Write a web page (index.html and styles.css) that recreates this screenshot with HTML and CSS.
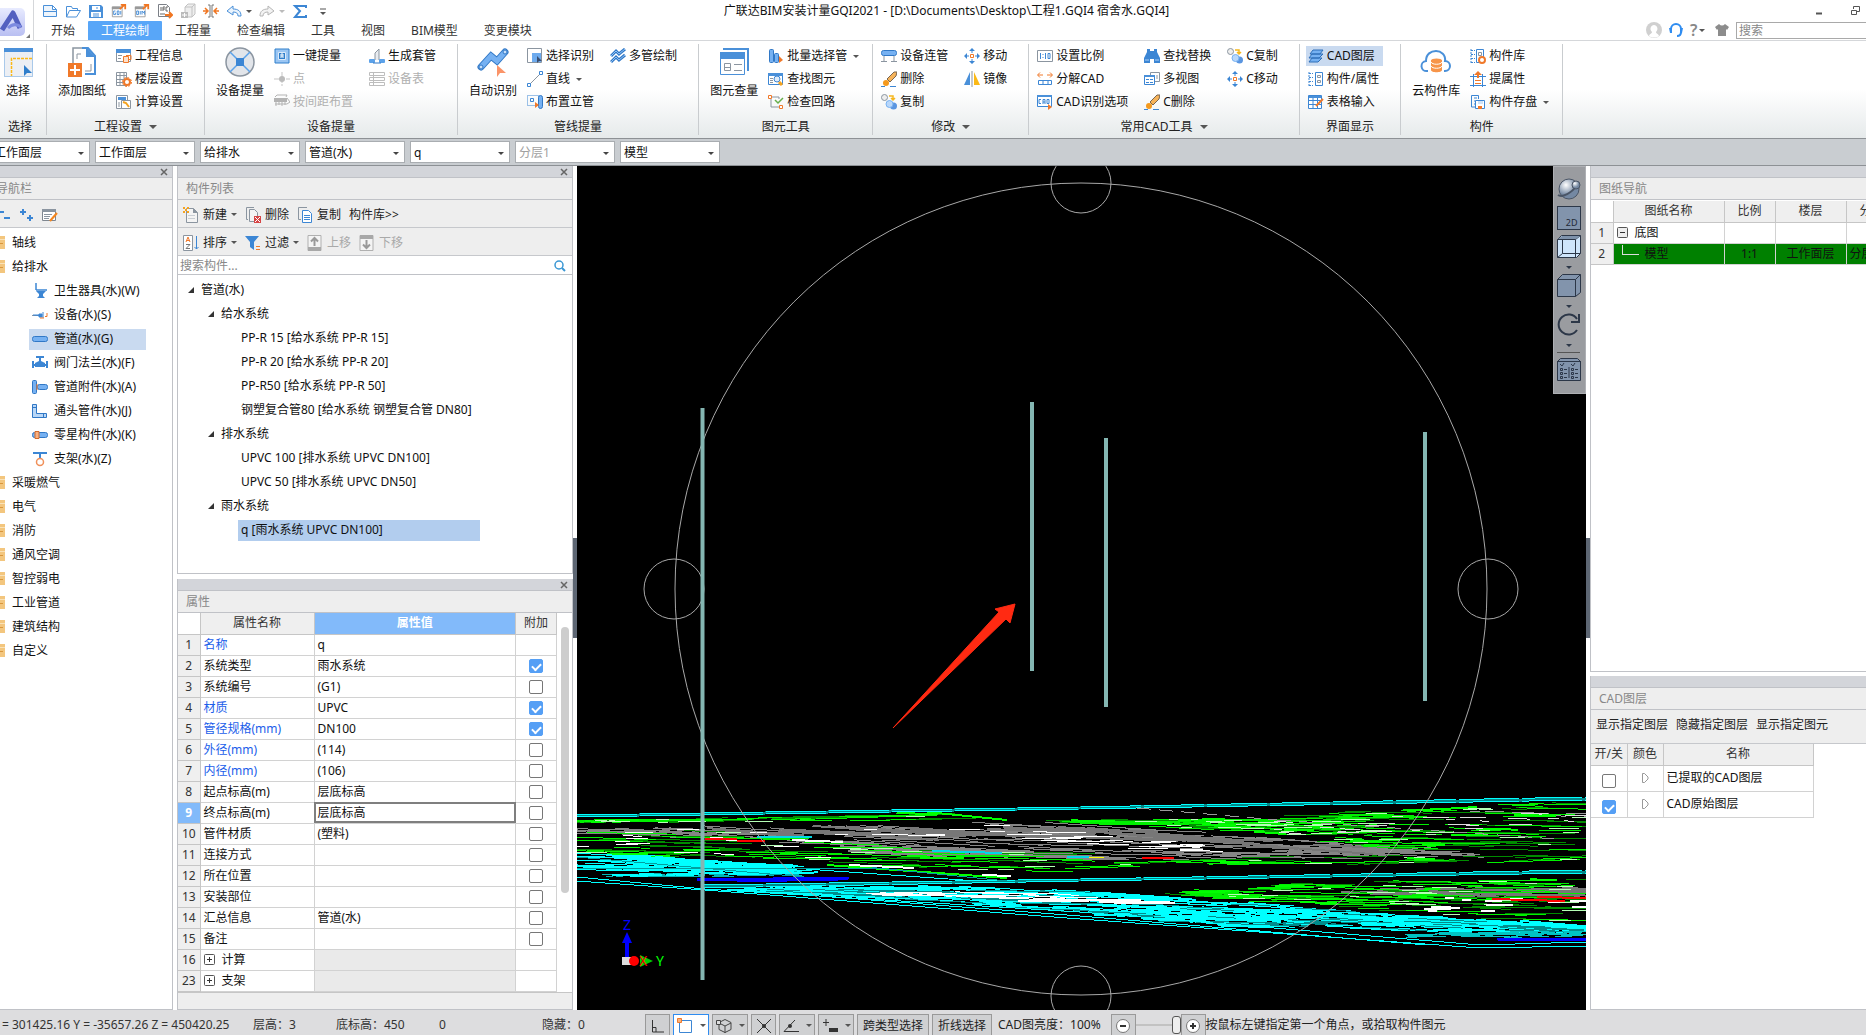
FILE: index.html
```html
<!DOCTYPE html>
<html lang="zh-CN">
<head>
<meta charset="utf-8">
<title>广联达BIM安装计量GQI2021</title>
<link rel="stylesheet" href="styles.css">
</head>
<body>
<svg class="defs" aria-hidden="true">
  <symbol id="i-new" viewBox="0 0 16 16"><path d="M1.5 2.500h9l4 4v7h-13zM10.500 2.500v4h4M4 8.500h-2.500M1.500 8.500h13" fill="#eef5fc" stroke="#4a90d9"/></symbol>
  <symbol id="i-open" viewBox="0 0 16 16"><path d="M1.500 14V3.500h5l1 2h5v2M1.500 14l3-6.500h11l-4 6.500z" fill="#fff" stroke="#4a90d9"/></symbol>
  <symbol id="i-save" viewBox="0 0 16 16"><path d="M1 2h12l2 2v11H1z" fill="#4a90d9"/><path d="M4 3h8v4H4zM3 9h10v5H3z" fill="#fff"/><path d="M5 11h6M5 13h6M9 4v2" stroke="#4a90d9"/></symbol>
  <symbol id="i-gqi" viewBox="0 0 18 16"><path d="M1.500 3.500h11v11h-11z" fill="#fff" stroke="#999"/><path d="M1 3h10v3H1z" fill="#999"/><path d="M5 8H3v4h2v-2M7 8h2v4H7zM11 8v4" fill="none" stroke="#3c86d4"/><path d="M10 6l5-5M11 1h5v5" fill="none" stroke="#f07622" stroke-width="2"/></symbol>
  <symbol id="i-bim" viewBox="0 0 18 16"><path d="M1.500 3.500h11v11h-11z" fill="#fff" stroke="#999"/><path d="M1 3h10v3H1z" fill="#999"/><path d="M3 8h2v4H3zM7 8v4M9 12V8l1.500 2L12 8v4" fill="none" stroke="#3c86d4"/><path d="M10 6l5-5M11 1h5v5" fill="none" stroke="#f07622" stroke-width="2"/></symbol>
  <symbol id="i-ifc" viewBox="0 0 16 16"><path d="M1.500 1.500h8l3 3v9h-11z" fill="#fff" stroke="#7b7f86"/><path d="M4 4v4M6 8V4h2M6 6h2M11 4H9v4h2M3 11h5" fill="none" stroke="#666"/><path d="M8 12h6M12 9l3 3-3 3" fill="none" stroke="#f07622" stroke-width="2"/></symbol>
  <symbol id="i-box" viewBox="0 0 16 16"><path d="M5 4l3-3h7v10l-3 3H5z" fill="#eee" stroke="#c2c2c2"/><path d="M5 4h7v10M12 4l3-3" fill="none" stroke="#c2c2c2"/><path d="M1 9h7v6H1z" fill="#bbb"/><path d="M4.500 10v4M2 12h5" stroke="#fff"/></symbol>
  <symbol id="i-merge" viewBox="0 0 16 16"><path d="M5 2h2v12H5M11 2H9v12h2" fill="none" stroke="#777"/><path d="M0 8h4M2 5l3 3-3 3M16 8h-4M14 5l-3 3 3 3" fill="none" stroke="#f07622" stroke-width="1.500"/></symbol>
  <symbol id="i-undo" viewBox="0 0 16 16"><path d="M1 8l6-5v3c5 0 8 2 8 7h-3c0-3-2-4-5-4v3z" fill="#eaf3fc" stroke="#4a90d9"/></symbol>
  <symbol id="i-redo" viewBox="0 0 16 16"><path d="M15 8L9 3v3c-5 0-8 2-8 7h3c0-3 2-4 5-4v3z" fill="#f3f3f3" stroke="#b5b5b5"/></symbol>
  <symbol id="i-sum" viewBox="0 0 16 16"><path d="M14 5V3H3l5 5-5 6h11v-2" fill="none" stroke="#3c86d4" stroke-width="2"/></symbol>
  <symbol id="i-more" viewBox="0 0 16 16"><path d="M5 6h6" stroke="#555"/><path d="M5 9h6l-3 3z" fill="#555"/></symbol>
  <symbol id="i-close" viewBox="0 0 8 8"><path d="M1 1l6 6M7 1L1 7" stroke="#666" stroke-width="1.500"/></symbol>

  <symbol id="b-select" viewBox="0 0 32 32"><path d="M2.500 2.500h28v28h-28z" fill="#eceff4" stroke="#c7ccd4"/><path d="M2 2h29v4H2z" fill="#4a90d9"/><path d="M9.500 31V12.500H30" fill="none" stroke="#fbb917" stroke-width="1.500" stroke-dasharray="3 1"/><path d="M22 19v11l3-3h5z" fill="#2f7ecb"/><path d="M2.500 6v24.500h28V6" fill="none" stroke="#a9c9ea"/></symbol>
  <symbol id="b-add" viewBox="0 0 32 32"><path d="M7 17V2h15" fill="none" stroke="#8b95a0" stroke-width="1.500"/><path d="M16 2h6l7 8v18h-10" fill="none" stroke="#4a90d9" stroke-width="2"/><path d="M20 1l9 10h-9z" fill="#4a90d9"/><path d="M11 13V8h4M25 18v7h-6" fill="none" stroke="#8b95a0"/><path d="M2 17h14v14H2z" fill="#f0792a"/><path d="M9 19v10M4 24h10" stroke="#fff" stroke-width="2"/></symbol>
  <symbol id="b-device" viewBox="0 0 32 32"><circle cx="16" cy="16" r="14" fill="#e2e5ea" stroke="#8b95a0" stroke-width="1.500"/><path d="M6 6l20 20M26 6L6 26" stroke="#5ca2ea" stroke-width="1.500"/><path d="M12 12h8v8h-8z" fill="#3c86d4"/></symbol>
  <symbol id="b-auto" viewBox="0 0 32 32"><path d="M4 21L14 10l6 5 8-9" fill="none" stroke="#3178c6" stroke-width="7" stroke-linecap="round"/><path d="M4 21L14 10l6 5 8-9" fill="none" stroke="#76b1f2" stroke-width="5" stroke-linecap="round"/><circle cx="4" cy="21" r="2" fill="#c6dffa" stroke="#3178c6"/><circle cx="28" cy="6" r="2" fill="#c6dffa" stroke="#3178c6"/><path d="M20 19v12l3-4 6 0z" fill="#fb9468"/></symbol>
  <symbol id="b-query" viewBox="0 0 32 32"><path d="M5 3h25v22" fill="none" stroke="#4a90d9" stroke-width="2"/><path d="M2.500 7.500h24v21h-24z" fill="#fff" stroke="#4a90d9"/><path d="M2 6h25v7H2z" fill="#4a90d9"/><path d="M6.500 17.500h6v7h-6zM6 21.500h6M16 18.500h8M16 24.500h8" fill="none" stroke="#8b95a0"/></symbol>
  <symbol id="b-cloud" viewBox="0 0 32 32"><path d="M8 25H7a5 5 0 0 1-1-10C6 8 11 5 16 5s10 4 9 10a5 5 0 0 1 0 10h-1" fill="none" stroke="#4a90d9" stroke-width="2"/><path d="M11 14v10c0 3 11 3 11 0V14" fill="#f7954a"/><ellipse cx="16.500" cy="14.500" rx="5.500" ry="2" fill="#f7954a"/><path d="M11 16c1 3 10 3 11 0M11 20c1 3 10 3 11 0" fill="none" stroke="#fff"/></symbol>

  <symbol id="s-info" viewBox="0 0 16 16"><path d="M.5 1.500h14v12H.5z" fill="#fff" stroke="#8b95a0"/><path d="M0 1h15v4H0z" fill="#4a90d9"/><path d="M2 7.500h4M2 10.500h3" stroke="#8b95a0"/><path d="M7.500 8.500h5v6h-5z" fill="#fbe0cb" stroke="#f0792a"/><path d="M10 7.500h5v4h-2" fill="none" stroke="#f0792a"/></symbol>
  <symbol id="s-floor" viewBox="0 0 16 16"><path d="M.5 1.500h10v13H.5zM4 1v14M0 4.500h11M0 8.500h11M0 11.500h11M8 1v7" fill="#fff" stroke="#8b95a0"/><circle cx="11" cy="11" r="4.500" fill="none" stroke="#f0792a" stroke-dasharray="2 1.500"/><circle cx="11" cy="11" r="3" fill="#fff" stroke="#f0792a" stroke-width="2"/></symbol>
  <symbol id="s-calc" viewBox="0 0 16 16"><path d="M.5 1.500h11v13H.5z" fill="#fff" stroke="#8b95a0"/><path d="M2 3h8v3H2z" fill="#4a90d9"/><path d="M3 8v5" stroke="#8b95a0"/><path d="M5.500 6.500h9v8h-9z" fill="#fff" stroke="#8b95a0"/><path d="M7 8l3 1 3 4" fill="none" stroke="#f5a31e" stroke-width="2"/></symbol>
  <symbol id="s-onekey" viewBox="0 0 16 16"><path d="M1 1h14v14H1z" fill="#9bc6f3" stroke="#2f7ecb"/><path d="M4.500 4.500h7v7h-7z" fill="#2f7ecb" stroke="#dcebfb"/><path d="M7 10V6h2v4M7 8h2" fill="none" stroke="#fff"/></symbol>
  <symbol id="s-point" viewBox="0 0 16 16"><path d="M8 1v14M0 8h16" stroke="#c5c5c5" stroke-dasharray="5 1"/><circle cx="8" cy="8" r="3" fill="#bbb"/></symbol>
  <symbol id="s-space" viewBox="0 0 16 16"><path d="M0 4h13v4H0z" fill="#b3b3b3"/><path d="M1 10h12M1 3l2-2h10l-1 2" fill="none" stroke="#b3b3b3"/><path d="M2 8v4M5 8v3M8 8v4M11 8v3M13 4l3 4-3 2" fill="none" stroke="#b3b3b3"/></symbol>
  <symbol id="s-sleeve" viewBox="0 0 16 16"><path d="M6 12V5l4-4v11" fill="#e8ebef" stroke="#8b95a0"/><rect x="0" y="11" width="6" height="4" rx="1" fill="#5ca2ea"/><rect x="10" y="11" width="6" height="4" rx="1" fill="#5ca2ea"/><path d="M4 15h8" stroke="#3178c6"/></symbol>
  <symbol id="s-list" viewBox="0 0 16 16"><path d="M.5 1.500h15v3H.5zM.5 6.500h15v3H.5zM.5 11.500h15v3H.5zM4.500 1v14" fill="none" stroke="#bdbdbd"/></symbol>
  <symbol id="s-pick" viewBox="0 0 16 16"><path d="M.5.5h14v14H.5z" fill="#fff" stroke="#8b95a0"/><path d="M5 5h9v9H5z" fill="#6eabee"/><path d="M10 8v7l2-2h3z" fill="#3b4f70"/></symbol>
  <symbol id="s-line" viewBox="0 0 16 16"><path d="M2 14L14 2" stroke="#8b95a0"/><path d="M.5 12.500h3v3h-3zM12.500.5h3v3h-3z" fill="#fff" stroke="#3c86d4"/></symbol>
  <symbol id="s-riser" viewBox="0 0 16 16"><path d="M.5 1.500h11v10H.5z" fill="none" stroke="#3c86d4" stroke-dasharray="1 1"/><path d="M3.500 4.500h3v3h-3z" fill="none" stroke="#3c86d4"/><rect x="11.500" y="1.500" width="4" height="13" rx="2" fill="#76b1f2" stroke="#3178c6"/><path d="M8 8v6l4-3z" fill="#f0792a"/></symbol>
  <symbol id="s-multi" viewBox="0 0 16 16"><path d="M1 8l5-5 3 3 6-5M1 14l5-5 3 3 6-5" fill="none" stroke="#3178c6" stroke-width="3"/><path d="M1 8l5-5 3 3 6-5M1 14l5-5 3 3 6-5" fill="none" stroke="#8ec1f6"/></symbol>
  <symbol id="s-batch" viewBox="0 0 16 16"><rect x="1.500" y="1.500" width="4" height="13" rx="1" fill="#76b1f2" stroke="#3178c6"/><rect x="6.500" y="5.500" width="4" height="9" rx="1" fill="#76b1f2" stroke="#3178c6"/><path d="M11 8v7l4-3z" fill="#f0792a"/></symbol>
  <symbol id="s-find" viewBox="0 0 16 16"><path d="M.5 2.500h14v11H.5z" fill="#fff" stroke="#3c86d4"/><path d="M0 2h15v3H0z" fill="#4a90d9"/><path d="M2 7.500h3M2 9.500h3M2 11.500h3" stroke="#8b95a0"/><circle cx="9" cy="8" r="3" fill="#dfebf8" stroke="#3c86d4"/><path d="M11 11l3 3" stroke="#f5a31e" stroke-width="3"/></symbol>
  <symbol id="s-loop" viewBox="0 0 16 16"><path d="M4 3h7M3 5v8h8M11 3v2" fill="none" stroke="#8b95a0"/><path d="M.5 1.500h3v3h-3zM11.500 11.500h3v3h-3z" fill="#fff" stroke="#f0792a"/><path d="M7 6l3 3 5-5" fill="none" stroke="#66ae4c" stroke-width="1.500"/></symbol>
  <symbol id="s-connect" viewBox="0 0 16 16"><path d="M3 8v6M13 8v6M0 13.500h6M10 13.500h6" stroke="#8b95a0"/><rect x=".5" y="2.500" width="15" height="5" rx="2" fill="#76b1f2" stroke="#3178c6"/></symbol>
  <symbol id="s-erase" viewBox="0 0 16 16"><path d="M13 1l3 0-1 4-6 6-3-3z" fill="#f6b35a" stroke="#7a6650"/><circle cx="5" cy="12" r="3" fill="#f59a1e"/><path d="M0 15.500h4M9 15.500h6" stroke="#3c86d4"/></symbol>
  <symbol id="s-copy" viewBox="0 0 16 16"><circle cx="3.500" cy="3.500" r="3" fill="#eee" stroke="#8b95a0"/><circle cx="12.500" cy="12" r="3.500" fill="#5a95e0"/><circle cx="8.500" cy="10" r="3.500" fill="#b9d7fa" stroke="#76b1f2"/><path d="M8 2h4v4M10 4l2 2 2-2" fill="none" stroke="#f5b61e" stroke-width="1.500"/></symbol>
  <symbol id="s-move" viewBox="0 0 16 16"><path d="M8 0l3 3H5zM8 16l3-3H5zM0 8l3-3v6zM16 8l-3-3v6z" fill="#3c86d4"/><path d="M8 3v2M8 11v2M3 8h2M11 8h2" stroke="#3c86d4"/><path d="M6.500 6.500h3v3h-3z" fill="none" stroke="#f0792a"/></symbol>
  <symbol id="s-mirror" viewBox="0 0 16 16"><path d="M6 1v13H0z" fill="#4a90d9"/><path d="M10 1v13h6z" fill="#fbb917"/><path d="M8 0v16" stroke="#8b95a0"/></symbol>
  <symbol id="s-scale" viewBox="0 0 16 16"><path d="M.5 2.500h15v11H.5z" fill="#fff" stroke="#8b95a0"/><path d="M3.500 5v6M6 6v1M6 9v1M8.500 5v6M11 5.500h2v5h-2z" fill="none" stroke="#3c86d4"/></symbol>
  <symbol id="s-explode" viewBox="0 0 16 16"><path d="M1 4h5M10 4h5M3 1.500L.5 4 3 6.500M13 1.500L15.500 4 13 6.500" fill="none" stroke="#f0792a"/><path d="M1.500 9.500h13v4h-13zM6 9v5M11 9v5" fill="#fff" stroke="#3c86d4"/></symbol>
  <symbol id="s-cadopt" viewBox="0 0 16 16"><path d="M.5 1.500h14v11H.5z" fill="#fff" stroke="#3c86d4"/><path d="M4 5.500H2v4h2M6 10V5.500h2V10M6 8h2M10 5.500v4h2v-4z" fill="none" stroke="#3c86d4"/><path d="M0 1h15v2H0z" fill="#4a90d9"/><path d="M11 10v6l4-3z" fill="#f0792a"/></symbol>
  <symbol id="s-binoc" viewBox="0 0 16 16"><path d="M3 1h3v2h4V1h3v3l3 6v5h-6v-4H6v4H0v-5l3-6z" fill="#3c86d4"/><path d="M1 12h4M11 12h4" stroke="#a9cff8"/></symbol>
  <symbol id="s-views" viewBox="0 0 16 16"><path d="M6.500 1.500h9v9h-9zM12 5h2M12 7h2" fill="#fff" stroke="#8b95a0"/><path d="M.5 4.500h10v9H.5z" fill="#fff" stroke="#3c86d4"/><path d="M0 4h11v2H0z" fill="#4a90d9"/><path d="M2 8.500h3M6 8.500h3M2 11.500h3M6 11.500h3" stroke="#3c86d4"/></symbol>
  <symbol id="s-layers" viewBox="0 0 16 16"><path d="M1 14l3-4h10l-4 4zM1 10l3-4h11l-4 4zM2 6l3-4h10l-3 4z" fill="#76b1f2" stroke="#2f6fb8"/></symbol>
  <symbol id="s-comp" viewBox="0 0 16 16"><path d="M1 1v14M1 2.500h4M1 6.500h4M1 10.500h4M1 14.500h4" stroke="#3c86d4" stroke-dasharray="2 1"/><path d="M7.500 1.500h7v13h-7z" fill="#fff" stroke="#3c86d4"/><path d="M9.500 4.500h3v2h-3zM9.500 9.500h3v2h-3z" fill="none" stroke="#8b95a0"/></symbol>
  <symbol id="s-complib" viewBox="0 0 16 16"><path d="M1 1v14M1 2.500h4M1 6.500h4M1 10.500h4M1 14.500h4" stroke="#3c86d4" stroke-dasharray="2 1"/><path d="M6.500 1.500h7v13h-7z" fill="#fff" stroke="#3c86d4"/><path d="M8.500 4.500h3v3h-3z" fill="none" stroke="#8b95a0"/><circle cx="12" cy="12" r="3" fill="#fff" stroke="#f0792a" stroke-width="2"/></symbol>
  <symbol id="s-table" viewBox="0 0 16 16"><path d="M.5 1.500h13v13H.5zM0 6.500h14M0 10.500h14M5 1v14M9.500 1v14" fill="#fff" stroke="#3c86d4"/><path d="M1 2h12v2H1z" fill="#4a90d9"/><path d="M8 12l7-7" stroke="#f0792a" stroke-width="2"/></symbol>
  <symbol id="s-attr" viewBox="0 0 16 16"><path d="M0 5.500h16M0 14.500h16M3.500 3v13M12.500 3v13" stroke="#3c86d4"/><path d="M8 0l4 4H4zM7 4h2v3H7z" fill="#f0792a"/><path d="M5 9.500h6M5 12.500h6" stroke="#f0792a"/></symbol>
  <symbol id="s-disk" viewBox="0 0 16 16"><path d="M6 13H1.500V1.500h7V5M4 4h3M4 7h1M4 10h1" fill="none" stroke="#3c86d4"/><path d="M5.500 6.500h9v8h-9z" fill="#fff" stroke="#3c86d4"/><path d="M8 7h5v3H8z" fill="#cfe2f7"/><path d="M8 12h4v3H8z" fill="#f0792a"/></symbol>

  <symbol id="n-toilet" viewBox="0 0 16 16"><path d="M4 0v7M4 7h11" stroke="#3c86d4" stroke-width="1.500"/><path d="M4 8h10l-3 3v2l2 2H5l2-2v-2z" fill="#3c86d4"/></symbol>
  <symbol id="n-device" viewBox="0 0 16 16"><path d="M0 8.500h9" stroke="#8b95a0"/><path d="M1 8h7v1M7 7h3v3H7zM11 5v6" fill="#3c86d4" stroke="#3c86d4"/><path d="M8 11h4M13 9.500h2V6" fill="none" stroke="#f0792a"/></symbol>
  <symbol id="n-pipe" viewBox="0 0 16 16"><rect x=".5" y="5.500" width="15" height="5" rx="2" fill="#76b1f2" stroke="#3178c6"/></symbol>
  <symbol id="n-valve" viewBox="0 0 16 16"><path d="M0 6h2v7H0zM14 6h2v7h-2zM4 1h8v2H9v3l4 2v4H3V8l4-2V3H4zM2 9h12v2H2z" fill="#3c86d4"/></symbol>
  <symbol id="n-acc" viewBox="0 0 16 16"><rect x="5.500" y="5.500" width="10" height="5" rx="2" fill="#76b1f2" stroke="#3178c6"/><rect x=".5" y="1.500" width="4" height="13" rx="1" fill="#76b1f2" stroke="#3178c6"/><path d="M5 5v6" stroke="#f0792a"/></symbol>
  <symbol id="n-elbow" viewBox="0 0 16 16"><path d="M.5 1.500h4v9h10v4H.5zM.5 4.500h4M11.500 10.500v4" fill="#b9d7f7" stroke="#3178c6"/></symbol>
  <symbol id="n-misc" viewBox="0 0 16 16"><rect x=".5" y="5.500" width="15" height="5" rx="2" fill="#76b1f2" stroke="#3178c6"/><path d="M3 4.500h4v7H3z" fill="#f7b184" stroke="#d46a2a"/></symbol>
  <symbol id="n-hang" viewBox="0 0 16 16"><path d="M1 2h14M8 2v5" stroke="#3c86d4" stroke-width="2"/><circle cx="8" cy="11" r="3.500" fill="none" stroke="#f0905a" stroke-width="1.500"/></symbol>
  <symbol id="n-folder" viewBox="0 0 16 16"><path d="M0 3h8l1-2h6v13H0z" fill="#f3c67e"/><path d="M0 4.500h15" stroke="#f9e2b8"/><path d="M9 8.500h4" stroke="#d9963c"/></symbol>
  <symbol id="n-plus" viewBox="0 0 16 16"><path d="M2 5h6M5 2v6M9 11h6M12 8v6" stroke="#3c86d4" stroke-width="2"/></symbol>
  <symbol id="n-minus" viewBox="0 0 16 16"><path d="M4 5h6M10 11h6" stroke="#3c86d4" stroke-width="2"/></symbol>
  <symbol id="n-edit" viewBox="0 0 16 16"><path d="M.5 2.500h13v11H.5z" fill="#fff" stroke="#7f8790"/><path d="M0 2h14v3H0z" fill="#8b95a0"/><path d="M2 7.500h8M2 9.500h6M2 11.500h5" stroke="#8b95a0"/><path d="M8 14l7-8" stroke="#f5861e" stroke-width="2"/></symbol>

  <symbol id="t-new" viewBox="0 0 16 16"><path d="M3.500 1.500h7l4 4v10h-11z" fill="#f4f4f4" stroke="#8b95a0"/><path d="M10 1v5h5z" fill="#8b95a0"/><path d="M5 8.500h7M5 11.500h7" stroke="#c9ced4"/><path d="M0 0h2v2H0zM4 0h2v2H4zM2 2h2v2H2zM0 4h2v2H0zM4 4h2v2H4z" fill="#f5a31e"/></symbol>
  <symbol id="t-del" viewBox="0 0 16 16"><path d="M9 .5H1.500v12H3" fill="none" stroke="#8b95a0"/><path d="M4.500 2.500h5l3 3v9h-8z" fill="#f4f4f4" stroke="#8b95a0"/><path d="M9 9h7v7H9z" fill="#d64545"/><path d="M10 10l5 5M15 10l-5 5" stroke="#fff"/></symbol>
  <symbol id="t-copy" viewBox="0 0 16 16"><path d="M10 .5H1.500v12H4" fill="none" stroke="#8b95a0"/><path d="M5.500 3.500h6l3 3v9h-9zM7 8.500h6M7 10.500h6M7 12.500h6" fill="#fff" stroke="#3c86d4"/></symbol>
  <symbol id="t-sort" viewBox="0 0 16 16"><path d="M.5.5h9v15h-9z" fill="#fff" stroke="#8b95a0"/><path d="M3 7l2-5 2 5M3.500 5.500h3" fill="none" stroke="#f0792a"/><path d="M3 9.500h4l-4 4h4" fill="none" stroke="#777"/><path d="M13.500 1v13M11.500 12l2 2 2-2" fill="none" stroke="#3c86d4"/></symbol>
  <symbol id="t-filter" viewBox="0 0 16 16"><path d="M0 1h14L9 7v8l-4-3V7z" fill="#3c86d4"/><path d="M11 11.500h4M11 14.500h4" stroke="#f0792a"/></symbol>
  <symbol id="t-up" viewBox="0 0 16 16"><path d="M1 .5h13v15H1z" fill="#f4f4f4" stroke="#b0b0b0"/><path d="M1 12h13v4H1z" fill="#a8a8a8"/><path d="M7.500 11V3M4 6.500L7.500 3 11 6.500" fill="none" stroke="#999" stroke-width="2"/></symbol>
  <symbol id="t-down" viewBox="0 0 16 16"><path d="M1 .5h13v15H1z" fill="#f4f4f4" stroke="#b0b0b0"/><path d="M1 0h13v4H1z" fill="#a8a8a8"/><path d="M7.500 5v8M4 9.500L7.500 13 11 9.500" fill="none" stroke="#999" stroke-width="2"/></symbol>
  <symbol id="t-tri" viewBox="0 0 8 8"><path d="M7 1v6H1z" fill="#333"/></symbol>
</svg>

<header class="top">
  <button class="logo" aria-label="应用菜单"><svg width="26" height="28" viewBox="0 0 26 28"><defs><linearGradient id="lg" x2="0" y2="1"><stop stop-color="#e8ebff"/><stop offset="1" stop-color="#b9bff2"/></linearGradient></defs><rect x="-6" width="31" height="28" rx="5" fill="url(#lg)"/><path d="M2 22L13 5l7 15" fill="none" stroke="#5360c0" stroke-width="5" stroke-linejoin="round"/><path d="M8 20c4-4 8-5 13-1" fill="none" stroke="#7d8be0" stroke-width="3"/></svg><svg class="corner" viewBox="0 0 4 4"><path d="M4 0v4H0z" fill="#777"/></svg></button>
  <div class="topmain">
    <div class="titlebar">
      <div class="quick">
        <button aria-label="新建"><svg><use href="#i-new"/></svg></button><button aria-label="打开"><svg><use href="#i-open"/></svg></button><button aria-label="保存"><svg><use href="#i-save"/></svg></button><button aria-label="导出GQI"><svg><use href="#i-gqi"/></svg></button><button aria-label="导出BIM"><svg><use href="#i-bim"/></svg></button><button aria-label="导出IFC"><svg><use href="#i-ifc"/></svg></button><button aria-label="模型"><svg><use href="#i-box"/></svg></button><button aria-label="合并"><svg><use href="#i-merge"/></svg></button><button class="drop" aria-label="撤销"><svg><use href="#i-undo"/></svg><i class="caret"></i></button><button class="drop off" aria-label="重做"><svg><use href="#i-redo"/></svg><i class="caret"></i></button><button aria-label="汇总"><svg><use href="#i-sum"/></svg></button><button aria-label="更多"><svg><use href="#i-more"/></svg></button>
      </div>
      <h1>广联达BIM安装计量GQI2021 - [D:\Documents\Desktop\工程1.GQI4 宿舍水.GQI4]</h1>
      <div class="wincontrols">
        <button aria-label="最小化"><svg viewBox="0 0 16 16"><path d="M5 10.500h6" stroke="#555" stroke-width="2"/></svg></button>
        <button aria-label="还原"><svg viewBox="0 0 16 16"><path d="M6.500 6V3.500h6v5H10M4.500 7.500h5v4h-5z" fill="none" stroke="#555"/></svg></button>
      </div>
    </div>
    <div class="tabrow">
      <nav class="tabs"><a href="#">开始</a><a href="#" class="on">工程绘制</a><a href="#">工程量</a><a href="#">检查编辑</a><a href="#">工具</a><a href="#">视图</a><a href="#">BIM模型</a><a href="#">变更模块</a></nav>
      <div class="account">
        <button aria-label="用户"><svg viewBox="0 0 16 16"><circle cx="8" cy="8" r="8" fill="#d0d0d0"/><path d="M3 14c1-3 3-2 3-4-3-3-1-7 2-7s5 4 2 7c0 2 2 1 3 4-3 2-7 2-10 0z" fill="#fff"/></svg></button>
        <button aria-label="客服"><svg viewBox="0 0 16 16"><path d="M3 10V7a5 5 0 0 1 10 0v3c0 3-2 4-4 4" fill="none" stroke="#2f8cf0" stroke-width="2"/><path d="M1 6h3v5H2zM12 6h3l-1 5h-2z" fill="#2f8cf0"/></svg></button>
        <button class="help" aria-label="帮助">?<i class="caret"></i></button>
        <button aria-label="皮肤"><svg viewBox="0 0 16 16"><path d="M1 5l4-3c2 2 4 2 6 0l4 3-2 3-1-1v7H4V7L3 8z" fill="#8c8c8c"/></svg></button>
        <input type="text" placeholder="搜索" aria-label="搜索">
      </div>
    </div>
  </div>
</header>

<section class="ribbon">
  <div class="group first"><div class="tools"><button class="big"><svg><use href="#b-select"/></svg>选择</button></div><div class="label">选择</div></div>
  <div class="group"><div class="tools"><button class="big"><svg><use href="#b-add"/></svg>添加图纸</button>
    <div class="col"><button><svg><use href="#s-info"/></svg>工程信息</button><button><svg><use href="#s-floor"/></svg>楼层设置</button><button><svg><use href="#s-calc"/></svg>计算设置</button></div></div><div class="label">工程设置<i class="caret"></i></div></div>
  <div class="group"><div class="tools"><button class="big"><svg><use href="#b-device"/></svg>设备提量</button>
    <div class="col"><button><svg><use href="#s-onekey"/></svg>一键提量</button><button disabled><svg><use href="#s-point"/></svg>点</button><button disabled><svg><use href="#s-space"/></svg>按间距布置</button></div>
    <div class="col"><button><svg><use href="#s-sleeve"/></svg>生成套管</button><button disabled><svg><use href="#s-list"/></svg>设备表</button></div></div><div class="label">设备提量</div></div>
  <div class="group"><div class="tools"><button class="big"><svg><use href="#b-auto"/></svg>自动识别</button>
    <div class="col"><button><svg><use href="#s-pick"/></svg>选择识别</button><button class="drop"><svg><use href="#s-line"/></svg>直线<i class="caret"></i></button><button><svg><use href="#s-riser"/></svg>布置立管</button></div>
    <div class="col"><button><svg><use href="#s-multi"/></svg>多管绘制</button></div></div><div class="label">管线提量</div></div>
  <div class="group"><div class="tools"><button class="big"><svg><use href="#b-query"/></svg>图元查量</button>
    <div class="col"><button class="drop"><svg><use href="#s-batch"/></svg>批量选择管<i class="caret"></i></button><button><svg><use href="#s-find"/></svg>查找图元</button><button><svg><use href="#s-loop"/></svg>检查回路</button></div></div><div class="label">图元工具</div></div>
  <div class="group small"><div class="tools">
    <div class="col"><button><svg><use href="#s-connect"/></svg>设备连管</button><button><svg><use href="#s-erase"/></svg>删除</button><button><svg><use href="#s-copy"/></svg>复制</button></div>
    <div class="col"><button><svg><use href="#s-move"/></svg>移动</button><button><svg><use href="#s-mirror"/></svg>镜像</button></div></div><div class="label">修改<i class="caret"></i></div></div>
  <div class="group small"><div class="tools">
    <div class="col"><button><svg><use href="#s-scale"/></svg>设置比例</button><button><svg><use href="#s-explode"/></svg>分解CAD</button><button><svg><use href="#s-cadopt"/></svg>CAD识别选项</button></div>
    <div class="col"><button><svg><use href="#s-binoc"/></svg>查找替换</button><button><svg><use href="#s-views"/></svg>多视图</button><button><svg><use href="#s-erase"/></svg>C删除</button></div>
    <div class="col"><button><svg><use href="#s-copy"/></svg>C复制</button><button><svg><use href="#s-move"/></svg>C移动</button></div></div><div class="label">常用CAD工具<i class="caret"></i></div></div>
  <div class="group small"><div class="tools">
    <div class="col"><button class="on"><svg><use href="#s-layers"/></svg>CAD图层</button><button><svg><use href="#s-comp"/></svg>构件/属性</button><button><svg><use href="#s-table"/></svg>表格输入</button></div></div><div class="label">界面显示</div></div>
  <div class="group"><div class="tools"><button class="big"><svg><use href="#b-cloud"/></svg>云构件库</button>
    <div class="col"><button><svg><use href="#s-complib"/></svg>构件库</button><button><svg><use href="#s-attr"/></svg>提属性</button><button class="drop"><svg><use href="#s-disk"/></svg>构件存盘<i class="caret"></i></button></div></div><div class="label">构件</div></div>
</section>

<section class="combos">
  <span class="combo"><select aria-label="楼层"><option>工作面层</option></select></span>
  <span class="combo"><select aria-label="工作面"><option>工作面层</option></select></span>
  <span class="combo"><select aria-label="专业"><option>给排水</option></select></span>
  <span class="combo"><select aria-label="构件类型"><option>管道(水)</option></select></span>
  <span class="combo"><select aria-label="构件"><option>q</option></select></span>
  <span class="combo"><select aria-label="分层" disabled><option>分层1</option></select></span>
  <span class="combo"><select aria-label="图纸"><option>模型</option></select></span>
</section>

<main class="work">
  <aside class="panel nav">
    <div class="strip"><button aria-label="关闭"><svg><use href="#i-close"/></svg></button></div>
    <h2>导航栏</h2>
    <div class="bar"><button aria-label="折叠"><svg><use href="#n-minus"/></svg></button><button aria-label="展开"><svg><use href="#n-plus"/></svg></button><button aria-label="编辑"><svg><use href="#n-edit"/></svg></button></div>
    <ul class="navlist">
      <li><svg><use href="#n-folder"/></svg>轴线</li>
      <li><svg><use href="#n-folder"/></svg>给排水</li>
      <li class="sub"><span><svg><use href="#n-toilet"/></svg>卫生器具(水)(W)</span></li>
      <li class="sub"><span><svg><use href="#n-device"/></svg>设备(水)(S)</span></li>
      <li class="sub on"><span><svg><use href="#n-pipe"/></svg>管道(水)(G)</span></li>
      <li class="sub"><span><svg><use href="#n-valve"/></svg>阀门法兰(水)(F)</span></li>
      <li class="sub"><span><svg><use href="#n-acc"/></svg>管道附件(水)(A)</span></li>
      <li class="sub"><span><svg><use href="#n-elbow"/></svg>通头管件(水)(J)</span></li>
      <li class="sub"><span><svg><use href="#n-misc"/></svg>零星构件(水)(K)</span></li>
      <li class="sub"><span><svg><use href="#n-hang"/></svg>支架(水)(Z)</span></li>
      <li><svg><use href="#n-folder"/></svg>采暖燃气</li>
      <li><svg><use href="#n-folder"/></svg>电气</li>
      <li><svg><use href="#n-folder"/></svg>消防</li>
      <li><svg><use href="#n-folder"/></svg>通风空调</li>
      <li><svg><use href="#n-folder"/></svg>智控弱电</li>
      <li><svg><use href="#n-folder"/></svg>工业管道</li>
      <li><svg><use href="#n-folder"/></svg>建筑结构</li>
      <li><svg><use href="#n-folder"/></svg>自定义</li>
    </ul>
  </aside>

  <div class="stack left">
    <section class="panel">
      <div class="strip"><button aria-label="关闭"><svg><use href="#i-close"/></svg></button></div>
      <h2>构件列表</h2>
      <div class="bar"><button><svg><use href="#t-new"/></svg>新建<i class="caret"></i></button><button><svg><use href="#t-del"/></svg>删除</button><button><svg><use href="#t-copy"/></svg>复制</button><button>构件库&gt;&gt;</button></div>
      <div class="bar"><button><svg><use href="#t-sort"/></svg>排序<i class="caret"></i></button><button><svg><use href="#t-filter"/></svg>过滤<i class="caret"></i></button><button disabled><svg><use href="#t-up"/></svg>上移</button><button disabled><svg><use href="#t-down"/></svg>下移</button></div>
      <div class="find"><input type="text" placeholder="搜索构件..." aria-label="搜索构件"><svg viewBox="0 0 16 16"><circle cx="7" cy="7" r="4" fill="none" stroke="#3a97d4" stroke-width="1.500"/><path d="M10 10l3 3" stroke="#3a97d4" stroke-width="2"/></svg></div>
      <ul class="tree">
        <li><svg><use href="#t-tri"/></svg>管道(水)</li>
        <li class="l2"><svg><use href="#t-tri"/></svg>给水系统</li>
        <li class="l3"><span>PP-R 15 [给水系统 PP-R 15]</span></li>
        <li class="l3"><span>PP-R 20 [给水系统 PP-R 20]</span></li>
        <li class="l3"><span>PP-R50 [给水系统 PP-R 50]</span></li>
        <li class="l3"><span>钢塑复合管80 [给水系统 钢塑复合管 DN80]</span></li>
        <li class="l2"><svg><use href="#t-tri"/></svg>排水系统</li>
        <li class="l3"><span>UPVC 100 [排水系统 UPVC DN100]</span></li>
        <li class="l3"><span>UPVC 50 [排水系统 UPVC DN50]</span></li>
        <li class="l2"><svg><use href="#t-tri"/></svg>雨水系统</li>
        <li class="l3 on"><span>q [雨水系统 UPVC DN100]</span></li>
      </ul>
    </section>

    <section class="panel props">
      <div class="strip"><button aria-label="关闭"><svg><use href="#i-close"/></svg></button></div>
      <h2>属性</h2>
      <div class="proparea">
      <table class="grid">
        <colgroup><col class="c-no"><col class="c-name"><col><col class="c-add"></colgroup>
        <thead><tr><th class="blank"></th><th>属性名称</th><th class="on">属性值</th><th>附加</th></tr></thead>
        <tbody>
        <tr><th>1</th><td class="key">名称</td><td>q</td><td></td></tr>
        <tr><th>2</th><td>系统类型</td><td>雨水系统</td><td><input type="checkbox" aria-label="系统类型" checked></td></tr>
        <tr><th>3</th><td>系统编号</td><td>(G1)</td><td><input type="checkbox" aria-label="系统编号"></td></tr>
        <tr><th>4</th><td class="key">材质</td><td>UPVC</td><td><input type="checkbox" aria-label="材质" checked></td></tr>
        <tr><th>5</th><td class="key">管径规格(mm)</td><td>DN100</td><td><input type="checkbox" aria-label="管径规格" checked></td></tr>
        <tr><th>6</th><td class="key">外径(mm)</td><td>(114)</td><td><input type="checkbox" aria-label="外径"></td></tr>
        <tr><th>7</th><td class="key">内径(mm)</td><td>(106)</td><td><input type="checkbox" aria-label="内径"></td></tr>
        <tr><th>8</th><td>起点标高(m)</td><td>层底标高</td><td><input type="checkbox" aria-label="起点标高"></td></tr>
        <tr><th class="on">9</th><td>终点标高(m)</td><td class="cur">层底标高</td><td><input type="checkbox" aria-label="终点标高"></td></tr>
        <tr><th>10</th><td>管件材质</td><td>(塑料)</td><td><input type="checkbox" aria-label="管件材质"></td></tr>
        <tr><th>11</th><td>连接方式</td><td></td><td><input type="checkbox" aria-label="连接方式"></td></tr>
        <tr><th>12</th><td>所在位置</td><td></td><td><input type="checkbox" aria-label="所在位置"></td></tr>
        <tr><th>13</th><td>安装部位</td><td></td><td><input type="checkbox" aria-label="安装部位"></td></tr>
        <tr><th>14</th><td>汇总信息</td><td>管道(水)</td><td><input type="checkbox" aria-label="汇总信息"></td></tr>
        <tr><th>15</th><td>备注</td><td></td><td><input type="checkbox" aria-label="备注"></td></tr>
        <tr><th>16</th><td><button class="exp" aria-label="展开计算"><svg viewBox="0 0 11 11"><rect x=".5" y=".5" width="10" height="10" rx="1" fill="#fff" stroke="#555"/><path d="M3 5.500h5M5.500 3v5" stroke="#333"/></svg></button>计算</td><td class="gray"></td><td></td></tr>
        <tr><th>23</th><td><button class="exp" aria-label="展开支架"><svg viewBox="0 0 11 11"><rect x=".5" y=".5" width="10" height="10" rx="1" fill="#fff" stroke="#555"/><path d="M3 5.500h5M5.500 3v5" stroke="#333"/></svg></button>支架</td><td class="gray"></td><td></td></tr>
        </tbody>
      </table>
      <div class="scroll"><i></i></div>
      </div>
    </section>
  </div>

  <div class="split"><i></i></div>

  <section class="view">
    <svg class="scene" viewBox="0 -1 1009 844" preserveAspectRatio="none">
      <g id="cad" fill="none"></g>
      <g fill="none" stroke="#a8a8a8"><circle cx="504" cy="422" r="406"/><circle cx="504" cy="16" r="30"/><circle cx="504" cy="829" r="30"/><circle cx="97" cy="422" r="30"/><circle cx="911" cy="422" r="30"/></g>
      <g stroke="#84b6b2" stroke-width="4"><path d="M125.500 241V813M455 235V504M529 271V540M848 265V534"/></g>
      <path d="M316 561L422 445l-4-3 20-5-5 19-4-4z" fill="#ff2a12" stroke="#ff2a12" stroke-linejoin="round"/>
      <path d="M50 791V774" stroke="#00f" stroke-width="4"/><path d="M50 765l5 11H45z" fill="#00f"/>
      <path d="M45 790h9v8h-9z" fill="#ddd"/><circle cx="57" cy="794" r="5" fill="#f00"/><path d="M63 788l13 6-13 6z" fill="#0c0"/>
      <g class="axis"><text x="46" y="763" fill="#00f">Z</text><text x="62" y="799" fill="#f00">X</text><text x="79" y="799" fill="#0f0">Y</text></g>
    </svg>
    <div class="viewtools">
      <button aria-label="三维"><svg viewBox="0 0 24 24"><defs><radialGradient id="sp" cx=".35" cy=".3"><stop stop-color="#fff"/><stop offset="1" stop-color="#7488a2"/></radialGradient></defs><circle cx="12" cy="12" r="10" fill="url(#sp)" stroke="#4a5566"/><path d="M1 18c4 3 14-2 19-10" fill="none" stroke="#4a5566" stroke-width="2"/><circle cx="19" cy="8" r="4" fill="url(#sp)" stroke="#4a5566"/></svg></button>
      <button class="two" aria-label="二维">2D</button>
      <button aria-label="线框"><svg viewBox="0 0 24 24"><path d="M.5 4.500l4-4h19v18l-4 4H.5z" fill="#cfe5fb" stroke="#2c3748"/><path d="M.5 4.500h18v18M18.500 4.500l5-4M5.500 1v17.500h18M5.500 18.500l-5 4" fill="none" stroke="#2c3748"/><path d="M1 4l4-3h18l-4 3z" fill="#7e92ab"/></svg><i class="caret"></i></button>
      <button aria-label="着色"><svg viewBox="0 0 24 24"><path d="M.5 5.500l5-5h18v18l-5 4H.5z" fill="#8294ac" stroke="#2c3748"/><path d="M.5 5.500h18v17M18.500 5.500l5-5" fill="none" stroke="#2c3748"/></svg><i class="caret"></i></button>
      <button aria-label="旋转"><svg viewBox="0 0 24 24"><path d="M20 17A10 10 0 1 1 20 6" fill="none" stroke="#2c3748" stroke-width="2"/><path d="M22 1v8h-8" fill="none" stroke="#2c3748" stroke-width="2"/></svg><i class="caret"></i></button>
      <hr>
      <button aria-label="显示设置"><svg viewBox="0 0 24 24"><path d="M.5 3.500l3-3h17l3 3v19H.5z" fill="#8294ac" stroke="#2c3748"/><path d="M0 3.500h24M12 9v11M3 6l2 2 2-3M14 6l2 2 2-3" fill="none" stroke="#2c3748"/><path d="M3.500 10.500h2v2h-2zM3.500 14.500h2v2h-2zM3.500 18.500h2v2h-2zM14.500 10.500h2v2h-2zM14.500 14.500h2v2h-2zM14.500 18.500h2v2h-2zM7 11.500h3M7 15.500h3M7 19.500h3M18 11.500h3M18 15.500h3M18 19.500h3" fill="none" stroke="#2c3748"/></svg></button>
    </div>
  </section>

  <div class="split"><i></i></div>

  <div class="stack right">
    <section class="panel">
      <div class="strip"></div>
      <h2>图纸导航</h2>
      <table class="grid sheets">
        <colgroup><col class="c-no"><col class="s-name"><col class="s-ratio"><col class="s-floor"><col class="s-layer"></colgroup>
        <thead><tr><th class="blank"></th><th>图纸名称</th><th>比例</th><th>楼层</th><th>分层</th></tr></thead>
        <tbody>
        <tr><th>1</th><td><button class="exp" aria-label="折叠底图"><svg viewBox="0 0 11 11"><rect x=".5" y=".5" width="10" height="10" rx="1" fill="#eee" stroke="#555"/><path d="M3 5.500h5" stroke="#333"/></svg></button>底图</td><td></td><td></td><td></td></tr>
        <tr class="green"><th>2</th><td><span class="branch"></span>模型</td><td>1:1</td><td>工作面层</td><td>分层1</td></tr>
        </tbody>
      </table>
    </section>
    <section class="panel">
      <div class="strip"></div>
      <h2>CAD图层</h2>
      <div class="bar layerbar"><button>显示指定图层</button><button>隐藏指定图层</button><button>显示指定图元</button></div>
      <table class="grid layers">
        <colgroup><col class="y-on"><col class="y-on"><col class="y-name"></colgroup>
        <thead><tr><th>开/关</th><th>颜色</th><th>名称</th></tr></thead>
        <tbody>
        <tr><td><input type="checkbox" aria-label="已提取的CAD图层"></td><td><svg viewBox="0 0 8 10"><path d="M1.500.5h2L7 4v2L3.500 9.500h-2z" fill="none" stroke="#999"/></svg></td><td>已提取的CAD图层</td></tr>
        <tr><td><input type="checkbox" aria-label="CAD原始图层" checked></td><td><svg viewBox="0 0 8 10"><path d="M1.500.5h2L7 4v2L3.500 9.500h-2z" fill="none" stroke="#999"/></svg></td><td>CAD原始图层</td></tr>
        </tbody>
      </table>
    </section>
  </div>
</main>

<footer class="status">
  <div class="readout"><span class="pos">= 301425.16 Y = -35657.26 Z = 450420.25</span><span class="lv">层高：3</span><span class="base">底标高：450</span><span class="cnt">0</span><span>隐藏：0</span></div>
  <button class="tg" aria-label="正交"><svg viewBox="0 0 16 16"><path d="M2.500 2v12H14M2 9.500h4V14" fill="none" stroke="#333"/></svg></button>
  <button class="tg wide on" aria-label="捕捉"><svg viewBox="0 0 16 16"><path d="M2.500 2.500h12v12h-12z" fill="#fff" stroke="#3c86d4"/><path d="M.5.5h4v4h-4z" fill="#f9b27c" stroke="#f0792a"/></svg><i class="caret"></i></button>
  <button class="tg wide" aria-label="三维捕捉"><svg viewBox="0 0 16 16"><path d="M3 4.500l6-3 6 3v7l-6 3-6-3zM3 5l6 3 6-3M9 8v7" fill="none" stroke="#444"/><path d="M.5 2.500h4v4h-4z" fill="#ddd" stroke="#444"/></svg><i class="caret"></i></button>
  <button class="tg" aria-label="交点"><svg viewBox="0 0 16 16"><path d="M1 1l14 14M15 1L1 15" stroke="#333"/><circle cx="8" cy="8" r="2" fill="#333"/></svg></button>
  <button class="tg wide" aria-label="角度"><svg viewBox="0 0 16 16"><path d="M12 2L1 13.500h15" fill="none" stroke="#333"/><circle cx="7" cy="8" r="2" fill="#333"/></svg><i class="caret"></i></button>
  <button class="tg wide" aria-label="动态输入"><svg viewBox="0 0 16 16"><path d="M1 4.500h6M4 1v7" stroke="#333"/><path d="M7 10h9v4H7z" fill="#333"/></svg><i class="caret"></i></button>
  <button class="tg txt">跨类型选择</button>
  <button class="tg txt">折线选择</button>
  <label class="bright" for="bright">CAD图亮度：100%</label>
  <button class="tg" aria-label="降低亮度"><svg viewBox="0 0 16 16"><circle cx="8" cy="8" r="6.500" fill="#fff" stroke="#777"/><path d="M5 8h6" stroke="#333" stroke-width="2"/></svg></button>
  <input type="range" id="bright" value="100">
  <button class="tg" aria-label="提高亮度"><svg viewBox="0 0 16 16"><circle cx="8" cy="8" r="6.500" fill="#fff" stroke="#777"/><path d="M5 8h6M8 5v6" stroke="#333" stroke-width="2"/></svg></button>
  <span>按鼠标左键指定第一个角点，或拾取构件图元</span>
</footer>
<script src="scene.js"></script>
</body>
</html>
```
FILE: styles.css
```css
* { box-sizing: border-box; }
html, body { height: 100%; }
body {
  margin: 0; display: flex; flex-direction: column; overflow: hidden;
  font: 12px/16px "Noto Sans", "Noto Sans CJK SC", sans-serif; color: #222; background: #fff;
}
button, input, select { font: inherit; color: inherit; margin: 0; padding: 0; border: 0; background: none; border-radius: 0; }
button { display: flex; align-items: center; white-space: nowrap; }
h1, h2 { margin: 0; font-size: 12px; font-weight: 400; white-space: nowrap; }
ul { margin: 0; padding: 0; list-style: none; }
svg { display: block; flex: none; width: 16px; height: 16px; }
.defs { position: absolute; width: 0; height: 0; }
.caret { flex: none; width: 0; border: 3px solid transparent; border-top-color: #555; border-bottom: 0; }

/* title and tabs */
.top { display: flex; flex: none; height: 41px; border-bottom: 1px solid #d5d7da; }
.logo { width: 34px; align-items: center; border-right: 1px solid #d5d7da; }
.logo svg { width: 26px; height: 28px; margin-top: 4px; }
.logo .corner { align-self: flex-end; width: 4px; height: 4px; margin: 0 0 2px; }
.topmain { flex: 1; min-width: 0; display: flex; flex-direction: column; justify-content: space-between; }
.titlebar { display: flex; align-items: center; height: 21px; padding-top: 1px; }
.quick { display: flex; align-items: center; gap: 7px; padding-left: 8px; }
.quick .drop { gap: 4px; }
.quick .off .caret { border-top-color: #bbb; }
h1 { flex: 1; text-align: center; color: #111; }
.wincontrols { display: flex; justify-content: flex-end; gap: 20px; width: 304px; padding-right: 3px; }
.tabrow { display: flex; justify-content: space-between; height: 19px; }
.tabs { display: flex; padding-left: 4px; }
.tabs a { padding: 1px 13px 0; line-height: 18px; color: #333; text-decoration: none; }
.tabs .on { background: #58a6f8; color: #fff; border-radius: 1px 1px 0 0; }
.account { display: flex; align-items: center; gap: 6px; height: 18px; }
.account input { width: 130px; height: 17px; padding: 0 2px; border: 1px solid #a9a9a9; border-right: 0; }
.account input::placeholder { color: #888; }
.help { width: 18px; gap: 2px; font-size: 16px; font-weight: 600; color: #888; }

/* ribbon */
.ribbon { display: flex; flex: none; height: 98px; padding-top: 3px; background: linear-gradient(#fff 50%, #e6eaeb); border-bottom: 1px solid #8d9195; }
.group { display: flex; flex-direction: column; padding-left: 11px; border-right: 1px solid #c9cccf; margin-bottom: 3px; }
.tools { display: flex; height: 76px; padding: 2px 13px 0 0; }
.big { flex-direction: column; gap: 5px; color: #111; margin-right: 8px; }
.big svg { width: 32px; height: 32px; }
.col { display: flex; flex-direction: column; gap: 3px; margin-right: 6px; }
.col:last-child { margin-right: 0; }
.col button { align-self: flex-start; height: 20px; gap: 3px; padding: 0 8px 0 2px; color: #111; }
.col .drop { padding-right: 0; }
.col .drop .caret { margin-left: 3px; }
.col button:disabled { color: #b0b0b0; }
.col .on { background: #c9daf0; }
.small { padding-left: 6px; }
.label { display: flex; align-items: center; justify-content: center; gap: 7px; height: 16px; margin-left: -11px; color: #222; }
.small .label { margin-left: -6px; }
.label .caret { border-width: 4px 4px 0; }
.first { padding-left: 2px; }
.first .tools { padding-right: 12px; }
.first .big { margin: 0; }
.first .label { margin-left: -8px; }

/* combo row */
.combos { display: flex; flex: none; gap: 5px; height: 27px; padding: 2px 0; background: #c9cdd1; border-bottom: 1px solid #8d9195; }
.combo { position: relative; width: 100px; background: #fff; border: 1px solid #a9adb1; }
.combo:first-child { margin-left: -10px; }
.combo::after { content: ""; position: absolute; right: 5px; top: 10px; border: 3px solid transparent; border-top-color: #444; border-bottom: 0; }
.combo select { appearance: none; width: 100%; height: 100%; padding: 2px 14px 0 3px; color: #111; }
.combo select:disabled { color: #a0a0a0; opacity: 1; }

/* work area */
.work { flex: 1; min-height: 0; display: flex; background: #fff; }
.panel { display: flex; flex-direction: column; min-height: 0; overflow: hidden; border: 1px solid #c0c2c7; border-top: 0; background: #fff; }
.strip { display: flex; flex: none; justify-content: flex-end; align-items: center; height: 12px; padding-right: 4px; background: #d3d5da; border-bottom: 1px solid #c0c2c7; }
.strip svg { width: 8px; height: 8px; }
.panel h2 { flex: none; height: 22px; padding-left: 8px; line-height: 22px; color: #888; background: #eee; border-bottom: 1px solid #c0c2c7; }
.bar { display: flex; flex: none; align-items: center; height: 28px; gap: 8px; padding: 2px 0 0 5px; background: #eee; border-bottom: 1px solid #c6c8cc; }
.bar button { gap: 4px; }
.bar button:disabled { color: #a9a9a9; }
.nav { flex: none; width: 173px; border-left: 0; }
.nav h2 { padding: 0; text-indent: -4px; }
.nav .bar { gap: 8px; margin-left: -6px; padding-left: 0; }
.navlist { padding-top: 3px; }
.navlist li { display: flex; align-items: center; height: 24px; color: #111; }
.navlist li > svg { margin: 0 6px 0 -10px; }
.sub span { display: flex; align-items: center; gap: 6px; width: 117px; height: 21px; margin-left: 29px; padding-left: 3px; white-space: nowrap; }
.sub.on span { background: #c9daf0; }
.stack { display: grid; min-height: 0; }
.left { flex: none; width: 396px; margin-left: 4px; grid-template-rows: minmax(0, 408fr) 5px minmax(0, 431fr); }
.left .panel:last-child { grid-row: 3; }
.find { display: flex; flex: none; align-items: center; height: 19px; padding: 1px 4px 0 2px; border-bottom: 1px solid #c0c2c7; }
.find input { flex: 1; height: 17px; outline: 0; }
.find input::placeholder { color: #888; }
.tree { padding-top: 3px; }
.tree li { display: flex; align-items: center; height: 24px; padding-left: 9px; color: #111; white-space: nowrap; }
.tree svg { width: 8px; height: 8px; margin-right: 6px; }
.tree .l2 { padding-left: 29px; }
.tree .l3 { padding-left: 60px; }
.tree span { width: 242px; height: 21px; padding-left: 3px; line-height: 20px; }
.tree .on span { background: #b2cdee; }

/* tables */
.grid { border-collapse: collapse; table-layout: fixed; }
.grid th, .grid td { height: 21px; padding: 0 3px; border: 1px solid #d2d2d2; line-height: 16px; font-weight: 400; white-space: nowrap; overflow: hidden; }
.grid th { padding: 0; background: #efefef; color: #333; border-color: #c6c6c6; text-align: center; }
.grid tr > :first-child { border-left: 0; }
.grid thead th { border-top: 0; }
.grid .blank { background: #fff; }
.grid td { color: #111; }
.grid .on { background: #82bafa; color: #fff; font-weight: 700; }
.grid .key { color: #1b5eea; }
.grid .gray { background: #eaeaea; }
.grid .cur { outline: 2px solid #7f7f7f; outline-offset: -2px; }
.c-no { width: 22px; }
.c-name { width: 114px; }
.c-add { width: 41px; }
.grid input { display: block; margin: 0 auto; }
input[type="checkbox"] { appearance: none; width: 14px; height: 14px; border: 1px solid #777; border-radius: 2px; background: #fff; }
input[type="checkbox"]:checked { border-color: #559ff5; background: #559ff5; }
input[type="checkbox"]:checked::after { content: ""; display: block; width: 7px; height: 4px; margin: 3px 0 0 2px; border: solid #fff; border-width: 0 0 2px 2px; transform: rotate(-45deg); }
.exp { display: inline-flex; width: 11px; margin-right: 7px; vertical-align: -1px; }
.exp svg { width: 11px; height: 11px; }
.props { background: #eee; }
.proparea { display: flex; background: #fff; border-bottom: 1px solid #c6c6c6; }
.proparea .grid { flex: 1; }
.scroll { width: 15px; padding: 14px 3px 0 4px; }
.scroll i { display: block; height: 73%; background: #cdcdcd; border-radius: 4px; }
.split { display: flex; flex: none; align-items: center; width: 4px; }
.split i { width: 4px; height: 100px; background: #5d6673; }

/* 3D view */
.view { position: relative; flex: 1; min-width: 0; background: #000; overflow: hidden; }
.scene { width: 100%; height: 100%; }
.axis { font: 14px "Noto Sans", sans-serif; }
.viewtools { position: absolute; top: 0; right: 0; display: flex; flex-direction: column; align-items: center; gap: 5px; width: 33px; padding: 10px 2px 11px 0; background: #9a9ca0; border: 1px solid #aeb0b4; }
.viewtools button { flex-direction: column; gap: 7px; }
.viewtools svg { width: 24px; height: 24px; }
.viewtools .caret { border-top-color: #2c3748; }
.viewtools .two { width: 24px; height: 24px; padding: 0 2px 0 0; justify-content: flex-end; align-items: flex-end; font-size: 9px; line-height: 12px; color: #1f2937; background: #8294ac; border: 1px solid #2c3748; }
.viewtools hr { width: 23px; height: 1px; margin: 0; border: 0; background: #555; }

/* right side */
.right { flex: none; width: 276px; grid-template-rows: minmax(0, 506fr) 4px minmax(0, 334fr); }
.right .panel { border-right: 0; }
.right .panel:last-child { grid-row: 3; }
.sheets { width: 306px; margin-top: 1px; }
.s-name { width: 111px; }
.s-ratio { width: 51px; }
.s-floor { width: 71px; }
.s-layer { width: 51px; }
.sheets td { text-align: center; }
.sheets td:nth-child(2) { text-align: left; }
.sheets td:last-child, .sheets th:last-child { padding-left: 3px; text-align: left; }
.sheets th:last-child { padding-left: 13px; }
.sheets .green td { background: #008000; }
.branch { display: inline-block; width: 17px; height: 10px; margin: 0 6px 0 5px; border: solid #ddd; border-width: 0 0 1px 1px; vertical-align: 3px; }
.layerbar { height: 34px; padding: 0 0 3px 5px; }
.layers { width: 222px; }
.y-on { width: 36px; }
.y-name { width: 150px; }
.layers tbody td { height: 26px; }
.layers tbody input { margin-top: 6px; }
.layers td svg { width: 8px; height: 10px; margin: 0 auto; }

/* status bar */
.status { display: flex; flex: none; align-items: center; height: 25px; padding-top: 5px; gap: 3px; background: #dddddf; white-space: nowrap; }
.readout { display: flex; width: 642px; padding-left: 2px; color: #333; }
.pos { width: 251px; }
.lv { width: 83px; }
.base { width: 103px; }
.cnt { width: 103px; }
.tg { height: 22px; width: 25px; justify-content: center; background: #cfd0d2; border: 1px solid #999; border-bottom: 0; }
.wide { width: 36px; gap: 7px; }
.tg.on { background: #fff; border-color: #2f8cf0; }
.txt { width: auto; padding: 0 5px; }
.bright { margin: 0 7px 0 3px; }
#bright { appearance: none; width: 45px; height: 18px; margin: 0 -3px; background: linear-gradient(#c2c2c2, #c2c2c2) center / 100% 2px no-repeat; }
#bright::-webkit-slider-thumb { appearance: none; width: 9px; height: 18px; background: #eee; border: 1px solid #555; border-radius: 3px; }
#bright + .tg + span { margin-left: -3px; }
```
FILE: scene.js
```js
// Drawing seen almost edge-on: long site lines plus bands of short strokes.
const NS = 'http://www.w3.org/2000/svg';
const cad = document.getElementById('cad');

function path(d, colour, width, dash) {
  const p = document.createElementNS(NS, 'path');
  p.setAttribute('d', d);
  p.setAttribute('stroke', colour);
  p.setAttribute('stroke-width', width || 1);
  if (dash) p.setAttribute('stroke-dasharray', dash);
  p.setAttribute('shape-rendering', 'crispEdges');
  cad.appendChild(p);
}

let seed = 11;
const rnd = () => (seed = (seed * 16807) % 2147483647) / 2147483647;

// edge: list of [x, top, bottom]; strokes are scattered between the two edges
function band(edge, n, len, slope, colour, width) {
  const x0 = edge[0][0], x1 = edge[edge.length - 1][0];
  let d = '';
  for (let i = 0; i < n; i++) {
    const x = x0 + rnd() * (x1 - x0);
    let k = 0;
    while (k < edge.length - 2 && x > edge[k + 1][0]) k++;
    const [ax, at, ab] = edge[k], [bx, bt, bb] = edge[k + 1];
    const f = (x - ax) / (bx - ax);
    const top = at + (bt - at) * f, bot = ab + (bb - ab) * f;
    const y = top + rnd() * (bot - top);
    const l = len * (0.4 + rnd()) / 2;
    const s = slope * (0.3 + rnd()) * l;
    d += `M${(x - l).toFixed(1)} ${(y - s).toFixed(1)}L${(x + l).toFixed(1)} ${(y + s).toFixed(1)}`;
  }
  path(d, colour, width);
}

// grey
band([[0, 663, 667], [150, 661, 670], [350, 658, 685], [503, 657, 692], [700, 671, 691], [860, 684, 688]], 150, 90, 0.06, '#858585');
band([[150, 663, 668], [503, 660, 670], [780, 680, 688]], 45, 100, 0.07, '#777', 2);
band([[280, 680, 686], [503, 684, 692]], 24, 90, 0.05, '#858585', 2);
band([[810, 724, 727], [1009, 719, 731]], 45, 70, 0.03, '#777', 2);
band([[910, 645, 647], [1009, 645, 650]], 10, 60, 0.05, '#999');

// green
const greens = [
  [[[0, 653, 656], [160, 650, 655], [360, 646, 653]], 18, 70, -0.03],
  [[[0, 667, 688], [130, 663, 692], [360, 685, 702], [503, 685, 706]], 32, 80, 0.03],
  [[[503, 654, 656], [700, 651, 666], [830, 642, 682], [1009, 634, 685]], 90, 64, 0.02],
  [[[503, 698, 702], [680, 690, 697], [1009, 688, 694]], 12, 90, -0.03],
  [[[620, 726, 729], [750, 716, 738], [1009, 711, 758]], 66, 60, 0.02]
];
for (const [edge, n, len, slope] of greens) {
  band(edge, n, len, slope, '#008c00');
  band(edge, n, len, slope, '#00f000');
  band(edge, Math.round(n / 2), 22, 0, '#b5ffb5');
  band(edge, Math.round(n / 7), 32, 0.02, '#0f0', 2);
}
path('M250 698L430 711M350 645L430 653M830 644L900 640', '#0f0', 2);

// cyan
band([[20, 686, 704], [100, 691, 704], [200, 698, 703]], 120, 60, 0.06, '#0ff');
band([[30, 707, 710], [220, 704, 709]], 80, 12, 0, '#00b6b6');
band([[40, 707, 709], [230, 704, 706]], 18, 30, -0.03, '#0ff', 2);
const sheet = [[190, 722, 725], [380, 720, 735], [503, 724, 747], [700, 738, 762], [900, 753, 764], [1009, 758, 764]];
band(sheet, 260, 60, 0.06, '#0ff');
band(sheet, 120, 60, 0.07, '#0ff', 2);
band(sheet, 70, 60, 0.05, '#008c8c');
band([[830, 766, 770], [1009, 764, 770]], 90, 14, 0, '#00c4c4');

path('M0 649L503 641L1009 632M126 720L503 713L1009 705', '#008787', 3);
path('M0 648L503 640L1009 630M0 650L503 642L1009 633M126 718L503 712L1009 703M126 721L503 714L1009 706', '#0ff', 1, '60 3');
path('M0 710L128 722L503 745L903 778L1009 775M0 714L128 723L503 752L903 781L1009 779M150 722L503 749L850 778M0 686L400 714', '#0ff');
path('M0 702L300 701L430 714M0 690L250 712', '#00a0a0');

// blue
path('M120 713L272 711M160 714L262 712M920 772L1009 773', '#00f', 3);

// white
band([[280, 662, 668], [440, 658, 672], [640, 680, 686]], 34, 32, 0.01, '#fff');
band([[0, 668, 680], [120, 660, 692], [270, 668, 690]], 16, 20, 0.01, '#fff');
band([[290, 724, 728], [503, 726, 734]], 34, 36, 0.02, '#fff');
band([[450, 732, 734], [590, 734, 737]], 8, 50, 0, '#fff', 2);
band([[700, 655, 670], [1009, 640, 660]], 26, 20, 0.03, '#ddd');
band([[840, 730, 745], [1009, 725, 745]], 14, 20, 0, '#fff', 2);
path('M272 698L337 701M405 708L434 709M215 673L266 675', '#fff', 2);

// red, yellow and grey dashes
path('M128 672H160M160 674H188M490 690H504M565 691H597M915 732L988 734M960 730L1009 731', '#f00', 2);
path('M503 690H527', '#ff0');
path('M180 670H235M355 684L425 686M490 690H512', '#00d8e8', 2);
path('M560 641L700 653M700 653L980 672', '#999', 1, '14 8');
```
